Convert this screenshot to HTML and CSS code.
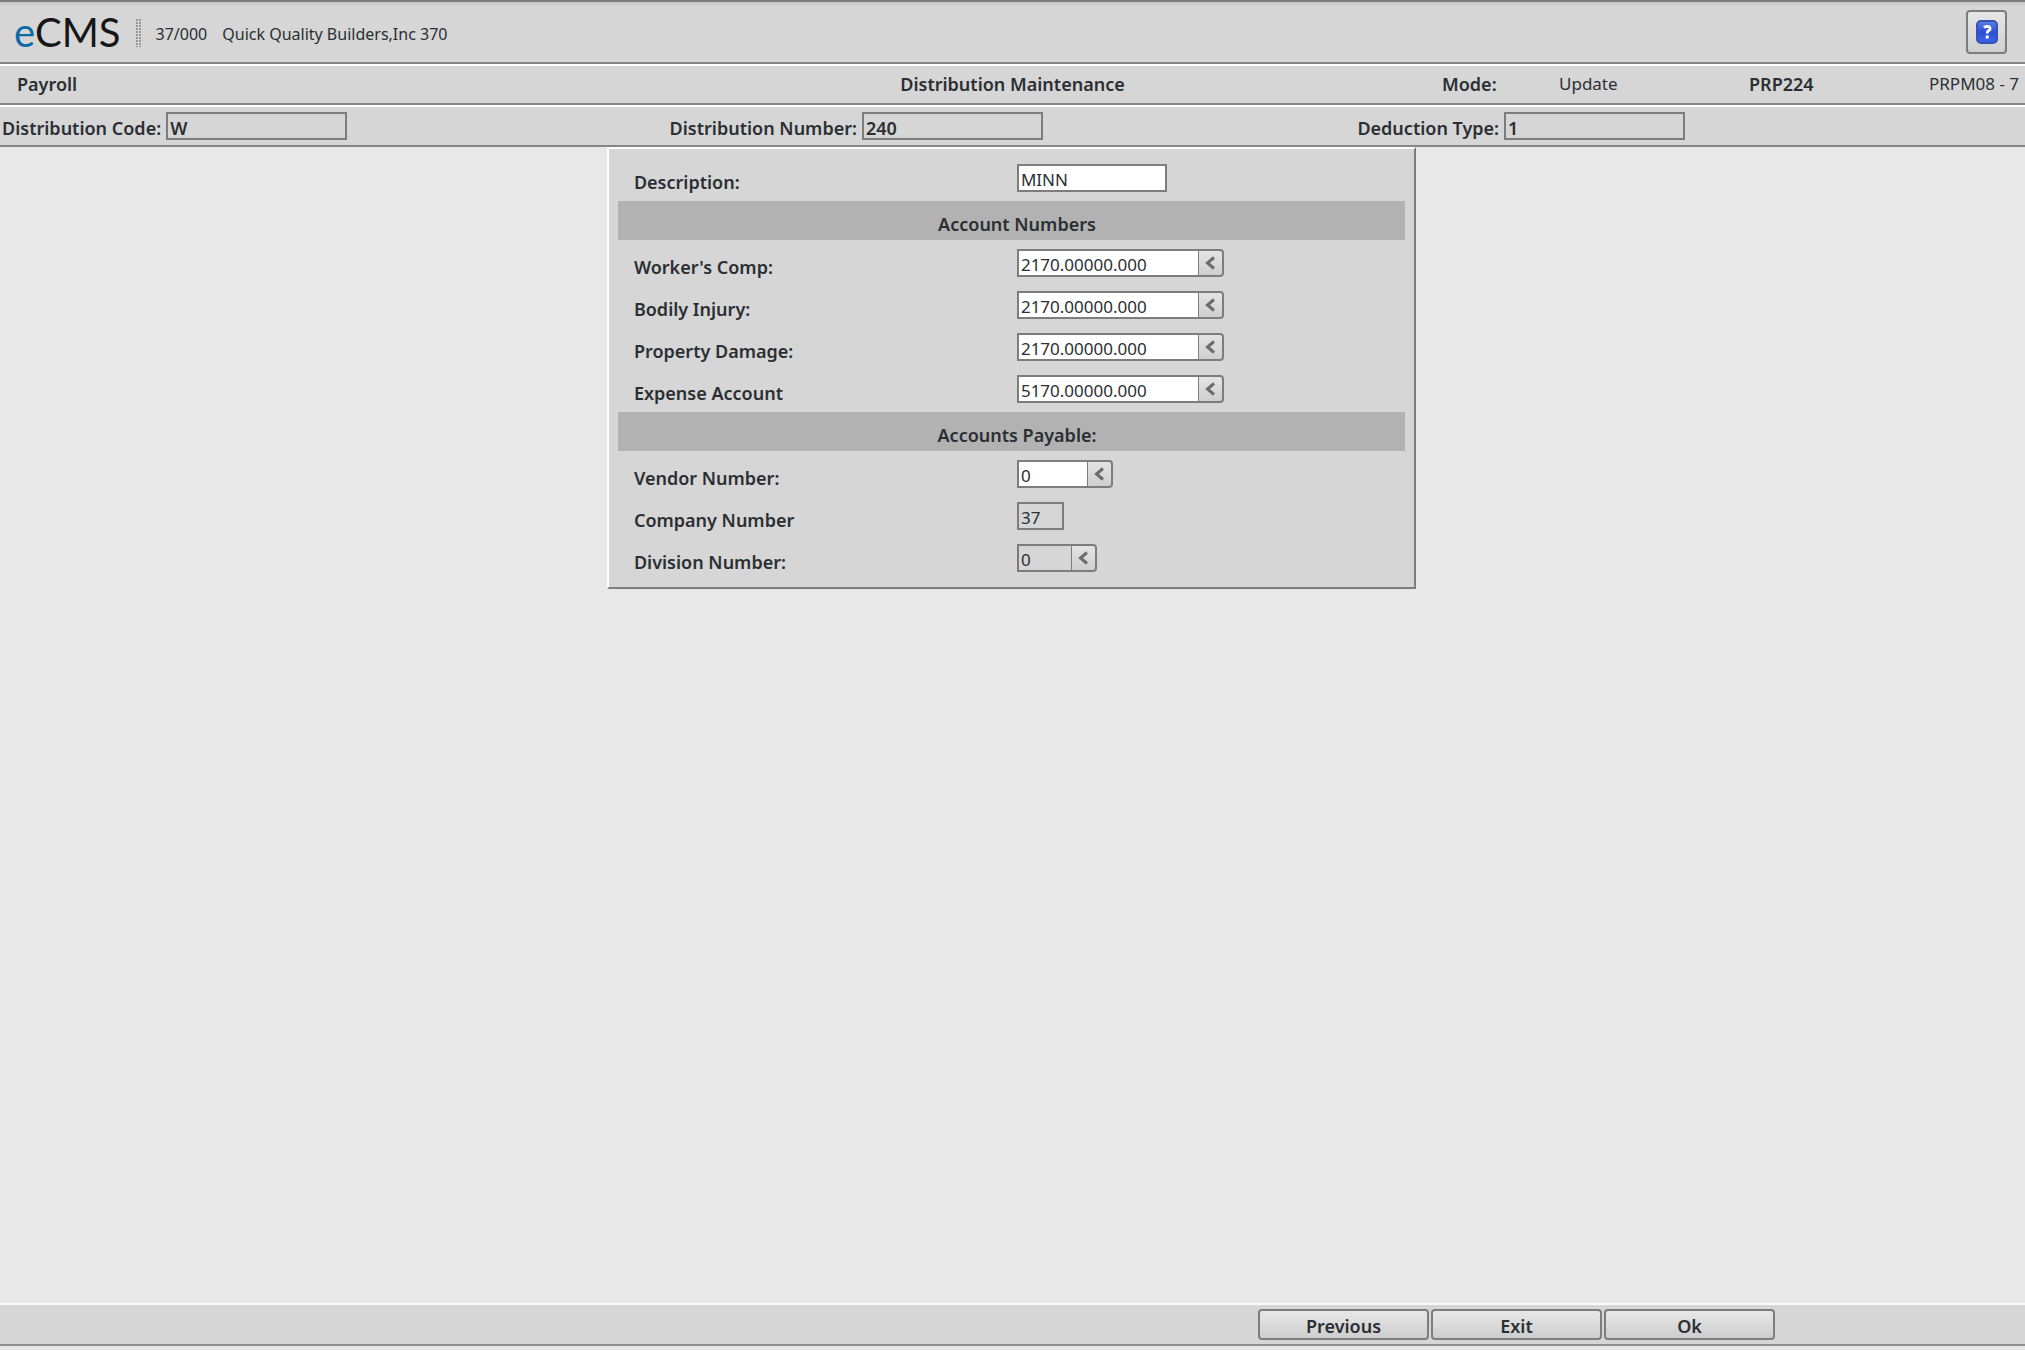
FILE: index.html
```html
<!DOCTYPE html>
<html lang="en">
<head>
<meta charset="utf-8">
<title>eCMS - Distribution Maintenance</title>
<link rel="stylesheet" href="styles.css">
</head>
<body>
<header class="topbar">
  <div class="logo"><span class="logo-e">e</span>CMS</div>
  <div class="grip"></div>
  <div class="company"><span>37/000</span><span>Quick Quality Builders,Inc 370</span></div>
  <button class="help" type="button" aria-label="Help">
    <svg width="24" height="26" viewBox="0 0 24 26" aria-hidden="true">
      <defs><linearGradient id="blue" x1="0" y1="0" x2="0" y2="1"><stop offset="0" stop-color="#5f82e8"/><stop offset="0.5" stop-color="#2b50d2"/><stop offset="1" stop-color="#3c66e6"/></linearGradient></defs>
      <rect x="2" y="2" width="20" height="22" rx="4" fill="url(#blue)" stroke="#3552b4" stroke-width="2"/>
      <path d="M9 8.500Q10 7.300 12 7.300C16 7.300 15.600 10.700 13.500 11.700Q12.200 12.400 12.200 14.500" fill="none" stroke="#fff" stroke-width="2.800"/>
      <rect x="10.700" y="16.500" width="3" height="3" fill="#fff"/>
    </svg>
  </button>
</header>
<div class="titlebar">
  <div class="module">Payroll</div>
  <h1 class="title">Distribution Maintenance</h1>
  <div class="status">
    <b>Mode:</b><span>Update</span><b>PRP224</b><span>PRPM08 - 7</span>
  </div>
</div>
<form class="main">
  <div class="keys">
    <div class="key"><label for="code">Distribution Code:</label><input id="code" class="field key-field" value="W" readonly></div>
    <div class="key"><label for="number">Distribution Number:</label><input id="number" class="field key-field" value="240" readonly></div>
    <div class="key"><label for="type">Deduction Type:</label><input id="type" class="field key-field" value="1" readonly></div>
  </div>
  <div class="content">
    <div class="panel">
      <div class="row"><label for="desc">Description:</label><input id="desc" class="field w-desc" value="MINN"></div>
      <h2 class="band">Account Numbers</h2>
      <div class="row"><label for="wc">Worker's Comp:</label><input id="wc" class="field w-account" value="2170.00000.000"><button class="lookup" type="button" aria-label="Look up worker's comp account"><svg width="10" height="14" viewBox="0 0 10 14"><path d="M9 1.500L2.500 7L9 12.500"/></svg></button></div>
      <div class="row"><label for="bi">Bodily Injury:</label><input id="bi" class="field w-account" value="2170.00000.000"><button class="lookup" type="button" aria-label="Look up bodily injury account"><svg width="10" height="14" viewBox="0 0 10 14"><path d="M9 1.500L2.500 7L9 12.500"/></svg></button></div>
      <div class="row"><label for="pd">Property Damage:</label><input id="pd" class="field w-account" value="2170.00000.000"><button class="lookup" type="button" aria-label="Look up property damage account"><svg width="10" height="14" viewBox="0 0 10 14"><path d="M9 1.500L2.500 7L9 12.500"/></svg></button></div>
      <div class="row"><label for="ea">Expense Account</label><input id="ea" class="field w-account" value="5170.00000.000"><button class="lookup" type="button" aria-label="Look up expense account"><svg width="10" height="14" viewBox="0 0 10 14"><path d="M9 1.500L2.500 7L9 12.500"/></svg></button></div>
      <h2 class="band">Accounts Payable:</h2>
      <div class="row"><label for="vn">Vendor Number:</label><input id="vn" class="field w-vendor" value="0"><button class="lookup" type="button" aria-label="Look up vendor"><svg width="10" height="14" viewBox="0 0 10 14"><path d="M9 1.500L2.500 7L9 12.500"/></svg></button></div>
      <div class="row"><label for="cn">Company Number</label><input id="cn" class="field w-company" value="37" readonly></div>
      <div class="row"><label for="dn">Division Number:</label><input id="dn" class="field w-division" value="0" readonly><button class="lookup" type="button" aria-label="Look up division"><svg width="10" height="14" viewBox="0 0 10 14"><path d="M9 1.500L2.500 7L9 12.500"/></svg></button></div>
    </div>
  </div>
  <footer class="actions">
    <button class="action" type="button">Previous</button>
    <button class="action" type="button">Exit</button>
    <button class="action" type="submit">Ok</button>
  </footer>
</form>
</body>
</html>
```
FILE: styles.css
```css
* { box-sizing: border-box; }

body {
  margin: 0;
  min-height: 100vh;
  padding-bottom: 4px;
  display: flex;
  flex-direction: column;
  background: #e8e8e8;
  color: #2b2f33;
  font: 17px/24px "Noto Sans", "Open Sans", sans-serif;
}

h1, h2 { margin: 0; }

h1, h2, b, label, .module, .action {
  font-size: 18px;
  font-weight: 600;
  line-height: 24px;
}

input, button { font: inherit; color: inherit; }

.topbar {
  display: flex;
  align-items: center;
  height: 64px;
  padding: 0 18px 0 14px;
  border-top: 2px solid #7c7c7c;
  border-bottom: 2px solid #868686;
  background: linear-gradient(#c4c4c4, #d6d6d6 4px);
}

.logo {
  color: #161616;
  font: 40px/48px Lato, sans-serif;
}

.logo-e { color: #0a6aa6; }

.grip {
  width: 5px;
  height: 29px;
  margin: 0 15px;
  background: repeating-linear-gradient(#d6d6d6 0 1px, transparent 1px 3px),
    linear-gradient(90deg, #999 0 2px, #d6d6d6 2px 3px, #999 3px 5px);
}

.company {
  display: flex;
  gap: 15px;
  padding-top: 4px;
  font-size: 16px;
}

.help {
  display: flex;
  align-items: center;
  justify-content: center;
  width: 41px;
  height: 44px;
  margin-left: auto;
  padding: 0;
  border: 2px solid #7d7d7d;
  border-radius: 4px;
  background: linear-gradient(#e6e6e6, #cfcfcf);
}

.titlebar {
  display: grid;
  grid-template-columns: 1fr auto 1fr;
  align-items: center;
  height: 41px;
  padding: 0 8px 2px;
  border-top: 2px solid #fff;
  border-bottom: 2px solid #868686;
  background: #d6d6d6;
}

.module { padding-left: 9px; }

.status {
  display: grid;
  grid-template-columns: 117px 190px 180px 88px;
  justify-content: end;
}

.status span { white-space: nowrap; }

.main {
  flex: 1;
  display: flex;
  flex-direction: column;
}

.keys {
  display: grid;
  grid-template-columns: 33% 34% 33%;
  height: 42px;
  padding: 5px 0 0 2px;
  border-top: 2px solid #fff;
  border-bottom: 2px solid #868686;
  background: #d6d6d6;
}

.key {
  display: flex;
  gap: 5px;
}

.key label { padding-top: 4px; }

.field {
  height: 28px;
  padding: 3px 2px 0;
  border: 2px solid #7d7d7d;
  border-radius: 0;
  background: #fff;
  outline: none;
}

.field:read-only { background: #d6d6d6; }

.key-field {
  width: 181px;
  font-size: 18px;
  font-weight: 600;
}

.content {
  flex: 1;
  display: flex;
  align-items: flex-start;
  justify-content: center;
  padding-right: 2px;
}

.panel {
  width: 40%;
  min-width: 640px;
  padding: 10px 9px 6px;
  border: 2px solid #fff;
  border-right-color: #7d7d7d;
  border-bottom-color: #7d7d7d;
  background: #d6d6d6;
}

.row {
  display: flex;
  height: 42px;
  padding: 5px 0 0 16px;
}

.row label {
  width: 383px;
  padding-top: 6px;
}

.band {
  height: 39px;
  margin-bottom: 4px;
  padding: 11px 0 0 11px;
  background: #b2b2b2;
  text-align: center;
}

.w-desc { width: 150px; }
.w-account { width: 183px; }
.w-vendor { width: 72px; }
.w-company { width: 47px; }
.w-division { width: 56px; }

.lookup {
  display: flex;
  align-items: center;
  justify-content: center;
  width: 26px;
  height: 28px;
  margin-left: -2px;
  padding: 0 1px 0 0;
  border: 2px solid #7d7d7d;
  border-left-width: 1px;
  border-radius: 0 4px 4px 0;
  background: linear-gradient(#e4e4e4, #cfcfcf);
}

.lookup path {
  fill: none;
  stroke: #6c6c6c;
  stroke-width: 3;
}

.actions {
  display: flex;
  gap: 2px;
  height: 43px;
  padding: 4px 250px 0 0;
  justify-content: flex-end;
  border-top: 2px solid #fafafa;
  border-bottom: 2px solid #8e8e8e;
  background: #d6d6d6;
}

.action {
  width: 171px;
  height: 31px;
  padding: 3px 0 0;
  border: 2px solid #7d7d7d;
  border-radius: 4px;
  background: linear-gradient(#e8e8e8, #cdcdcd);
}
```
